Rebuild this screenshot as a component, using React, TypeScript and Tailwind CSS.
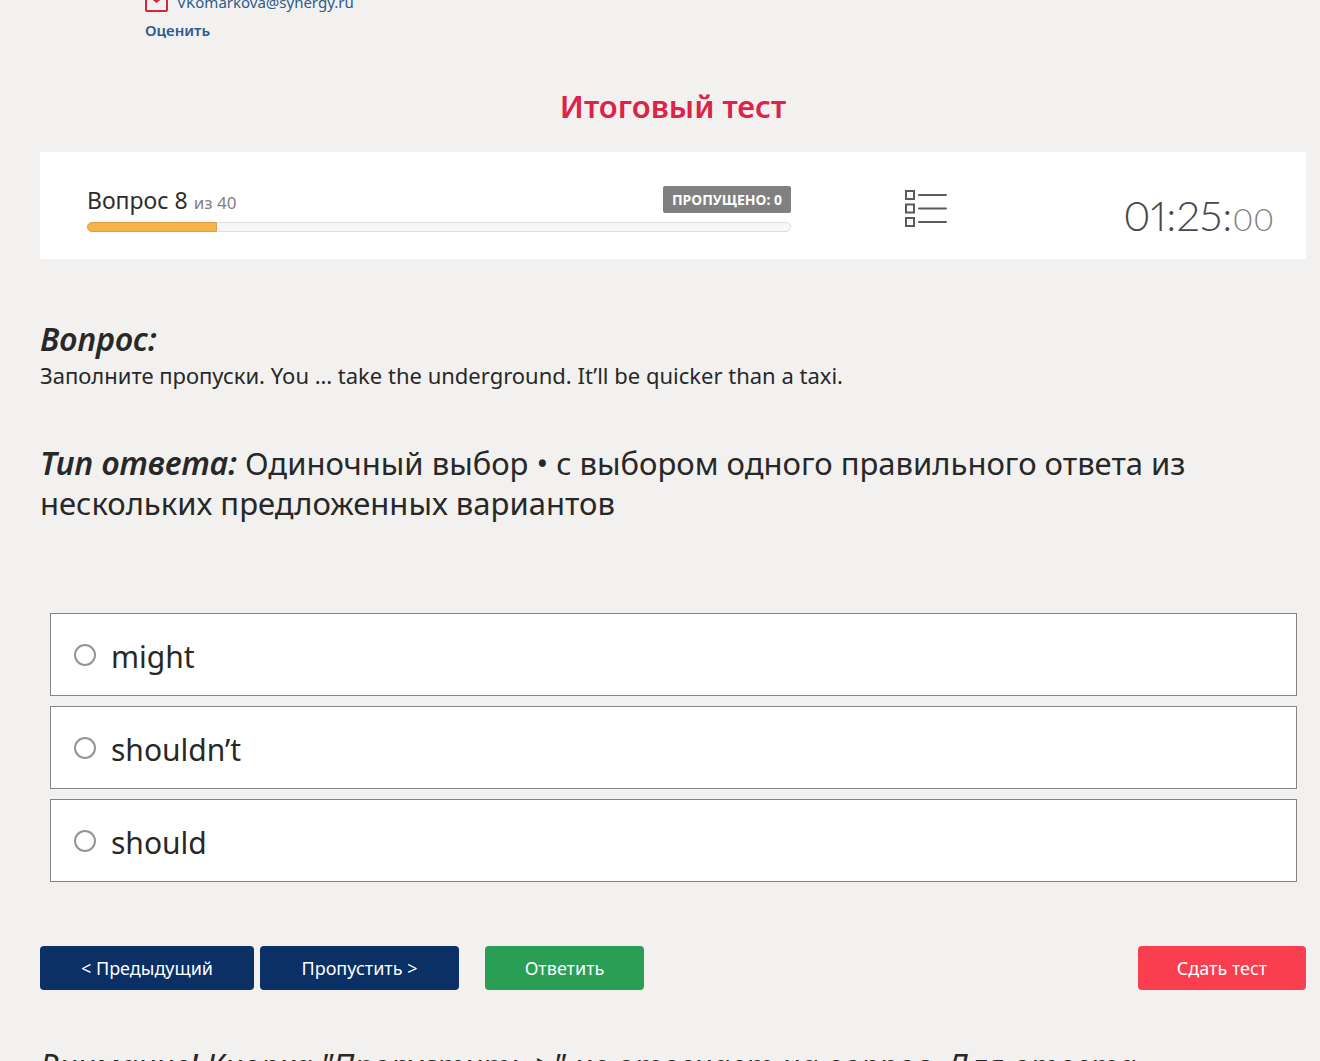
import { useState } from 'react';

const TOTAL = 40;
const current = 8;
const answers = ['might', 'shouldn’t', 'should'];

function MailIcon() {
  return (
    <svg width="24" height="20" viewBox="0 0 24 20" fill="none" stroke="#d6263f" strokeWidth="2">
      <rect x="1" y="1" width="21" height="18" rx="1" />
      <path d="M1 1 11.5 9 22 1" strokeWidth="3" />
    </svg>
  );
}

function ListIcon() {
  return (
    <svg width="43" height="39" viewBox="0 0 43 39" fill="none" stroke="#5b5b5b" strokeWidth="2">
      <rect x="2" y="2" width="8" height="8" />
      <rect x="2" y="15.5" width="8" height="8" />
      <rect x="2" y="29" width="8" height="8" />
      <path d="M15 6h27M15 19.5h27M15 33h27" strokeLinecap="round" />
    </svg>
  );
}

function Heading() {
  return (
    <div className="-mt-3 pl-[105px] text-[#2b5b8c]">
      <a href="mailto:VKomarkova@synergy.ru" className="flex h-7 items-center gap-2 text-[15px]">
        <MailIcon />
        VKomarkova@synergy.ru
      </a>
      <a href="#rate" className="inline-block text-[15px] leading-7 font-semibold">
        Оценить
      </a>
    </div>
  );
}

function StatusBar() {
  return (
    <section className="mt-[26px] flex h-[107px] items-start bg-white">
      <div className="ml-[47px] w-[704px] pt-8">
        <div className="flex h-9 items-start justify-between">
          <p className="text-[23px] leading-8 text-[#2d2d2d]">
            Вопрос {current} <span className="text-[17px] text-[#808080]">из {TOTAL}</span>
          </p>
          <span className="mt-0.5 rounded-xs bg-[#808080] px-[9px] text-[14px] leading-[27px] font-bold text-white">
            ПРОПУЩЕНО: 0
          </span>
        </div>
        <div className="mt-0.5 h-[10px] rounded-full border border-[#dedede] bg-[#f7f7f7]">
          <div className="-mt-px -ml-px h-[10px] w-[130px] rounded-l-full border border-[#dda04a] bg-[#f8b24a]" />
        </div>
      </div>
      <button type="button" aria-label="Список вопросов" className="mt-[37px] ml-[113px]">
        <ListIcon />
      </button>
      <p className="mt-9 mr-8 ml-auto font-['Lato',sans-serif] text-[42px] leading-[54px] font-light text-[#484848] proportional-nums">
        01:25:<span className="text-[32px] text-[#808080]">00</span>
      </p>
    </section>
  );
}

export default function App() {
  const [selected, setSelected] = useState('');

  return (
    <div className="h-screen overflow-hidden bg-[#f2f1ef] pr-[14px] pl-10 font-['Noto_Sans','Open_Sans',sans-serif] text-[#282828]">
      <div className="flow-root">
        <Heading />

        <h1 className="mt-[42px] text-center text-[31px] leading-10 font-semibold text-[#dc2348]">
          Итоговый тест
        </h1>

        <StatusBar />

        {/* Question */}
        <section className="mt-[60px]">
          <h2 className="text-[32px] leading-10 font-semibold italic">Вопрос:</h2>
          <p className="text-[22px] leading-8">
            Заполните пропуски. You … take the underground. It’ll be quicker than a taxi.
          </p>
        </section>
        <p className="mt-[52px] pr-20 text-[31px] leading-10">
          <strong className="text-[32px] font-semibold italic">Тип ответа:</strong> Одиночный выбор • с выбором
          одного правильного ответа из нескольких предложенных вариантов
        </p>

        {/* Answers */}
        <div className="mt-[90px] flex flex-col gap-[10px] pr-[9px] pl-[10px]">
          {answers.map((answer) => (
            <label
              key={answer}
              className="flex h-[83px] items-center gap-[15px] border border-[#858585] bg-white px-[23px] text-[30px]"
            >
              <input
                type="radio"
                name="answer"
                value={answer}
                checked={selected === answer}
                onChange={() => setSelected(answer)}
                className="size-[22px] appearance-none rounded-full border-2 border-[#949494] bg-white checked:border-[7px]"
              />
              <span className="pt-1">{answer}</span>
            </label>
          ))}
        </div>

        {/* Actions */}
        <div className="mt-16 flex h-11 text-[18px] text-white">
          <button type="button" className="mr-1.5 w-[214px] rounded bg-[#0a3066]">
            &lt; Предыдущий
          </button>
          <button type="button" className="w-[199px] rounded bg-[#0a3066]">
            Пропустить &gt;
          </button>
          <button type="button" className="ml-[26px] w-[159px] rounded bg-[#289f55]">
            Ответить
          </button>
          <button type="button" className="ml-auto w-[168px] rounded bg-[#f93e50]">
            Сдать тест
          </button>
        </div>

        <p className="mt-14 text-[32px] leading-10 italic">
          Внимание! Кнопка "Пропустить &gt;" не отвечает на вопрос. Для ответа
        </p>
      </div>
    </div>
  );
}
